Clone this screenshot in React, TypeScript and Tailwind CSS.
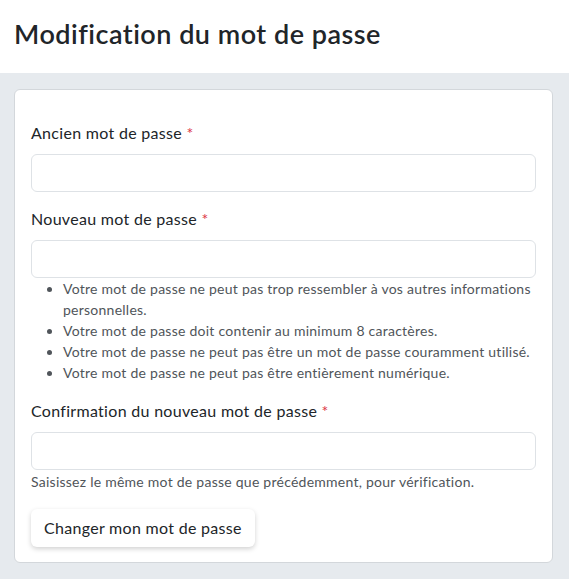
const font = { fontFamily: "Lato, 'Noto Sans', sans-serif" };

function Label({ children }: { children: string }) {
  return (
    <label className="mb-[9px] block text-[16px] leading-[24px] tracking-[0.3px] text-[#212529]">
      {children} <span className="text-[#dc3545]">*</span>
    </label>
  );
}

function Field() {
  return (
    <input
      type="password"
      className="block h-[38px] w-full rounded-md border border-[#dee2e6] bg-white px-3 outline-none"
    />
  );
}

const rules = [
  "Votre mot de passe ne peut pas trop ressembler à vos autres informations personnelles.",
  "Votre mot de passe doit contenir au minimum 8 caractères.",
  "Votre mot de passe ne peut pas être un mot de passe couramment utilisé.",
  "Votre mot de passe ne peut pas être entièrement numérique.",
];

export default function App() {
  return (
    <div className="min-h-[579px] bg-[#e6eaee]" style={font}>
      <header className="h-[73px] bg-white px-[14px] pt-[14px]">
        <h1 className="text-[27px] font-semibold leading-[40px] tracking-[0.5px] text-[#212529]">
          Modification du mot de passe
        </h1>
      </header>
      <main className="pt-[16px] pr-[16px] pb-[16px] pl-[14px]">
        <div className="rounded-md border border-[#d3d7db] bg-white pt-[31px] pr-[16px] pb-[15px] pl-[16px]">
          <form className="flex flex-col">
            <Label>Ancien mot de passe</Label>
            <Field />

            <div className="mt-[15px]">
              <Label>Nouveau mot de passe</Label>
              <Field />
              <ul className="list-disc pl-8 text-[14px] leading-[21px] tracking-[0.25px] text-[#50555a]">
                {rules.map((r) => (
                  <li key={r}>{r}</li>
                ))}
              </ul>
            </div>

            <div className="mt-[16px]">
              <Label>Confirmation du nouveau mot de passe</Label>
              <Field />
              <p className="mt-[1px] text-[14px] leading-[21px] tracking-[0.25px] text-[#50555a]">
                Saisissez le même mot de passe que précédemment, pour vérification.
              </p>
            </div>

            <div className="mt-[17px]">
              <button
                type="button"
                className="h-[38px] rounded-md bg-white px-[13px] text-[16px] tracking-[0.3px] text-[#212529] shadow-[0_2px_5px_rgba(0,0,0,0.18)]"
              >
                Changer mon mot de passe
              </button>
            </div>
          </form>
        </div>
      </main>
    </div>
  );
}
